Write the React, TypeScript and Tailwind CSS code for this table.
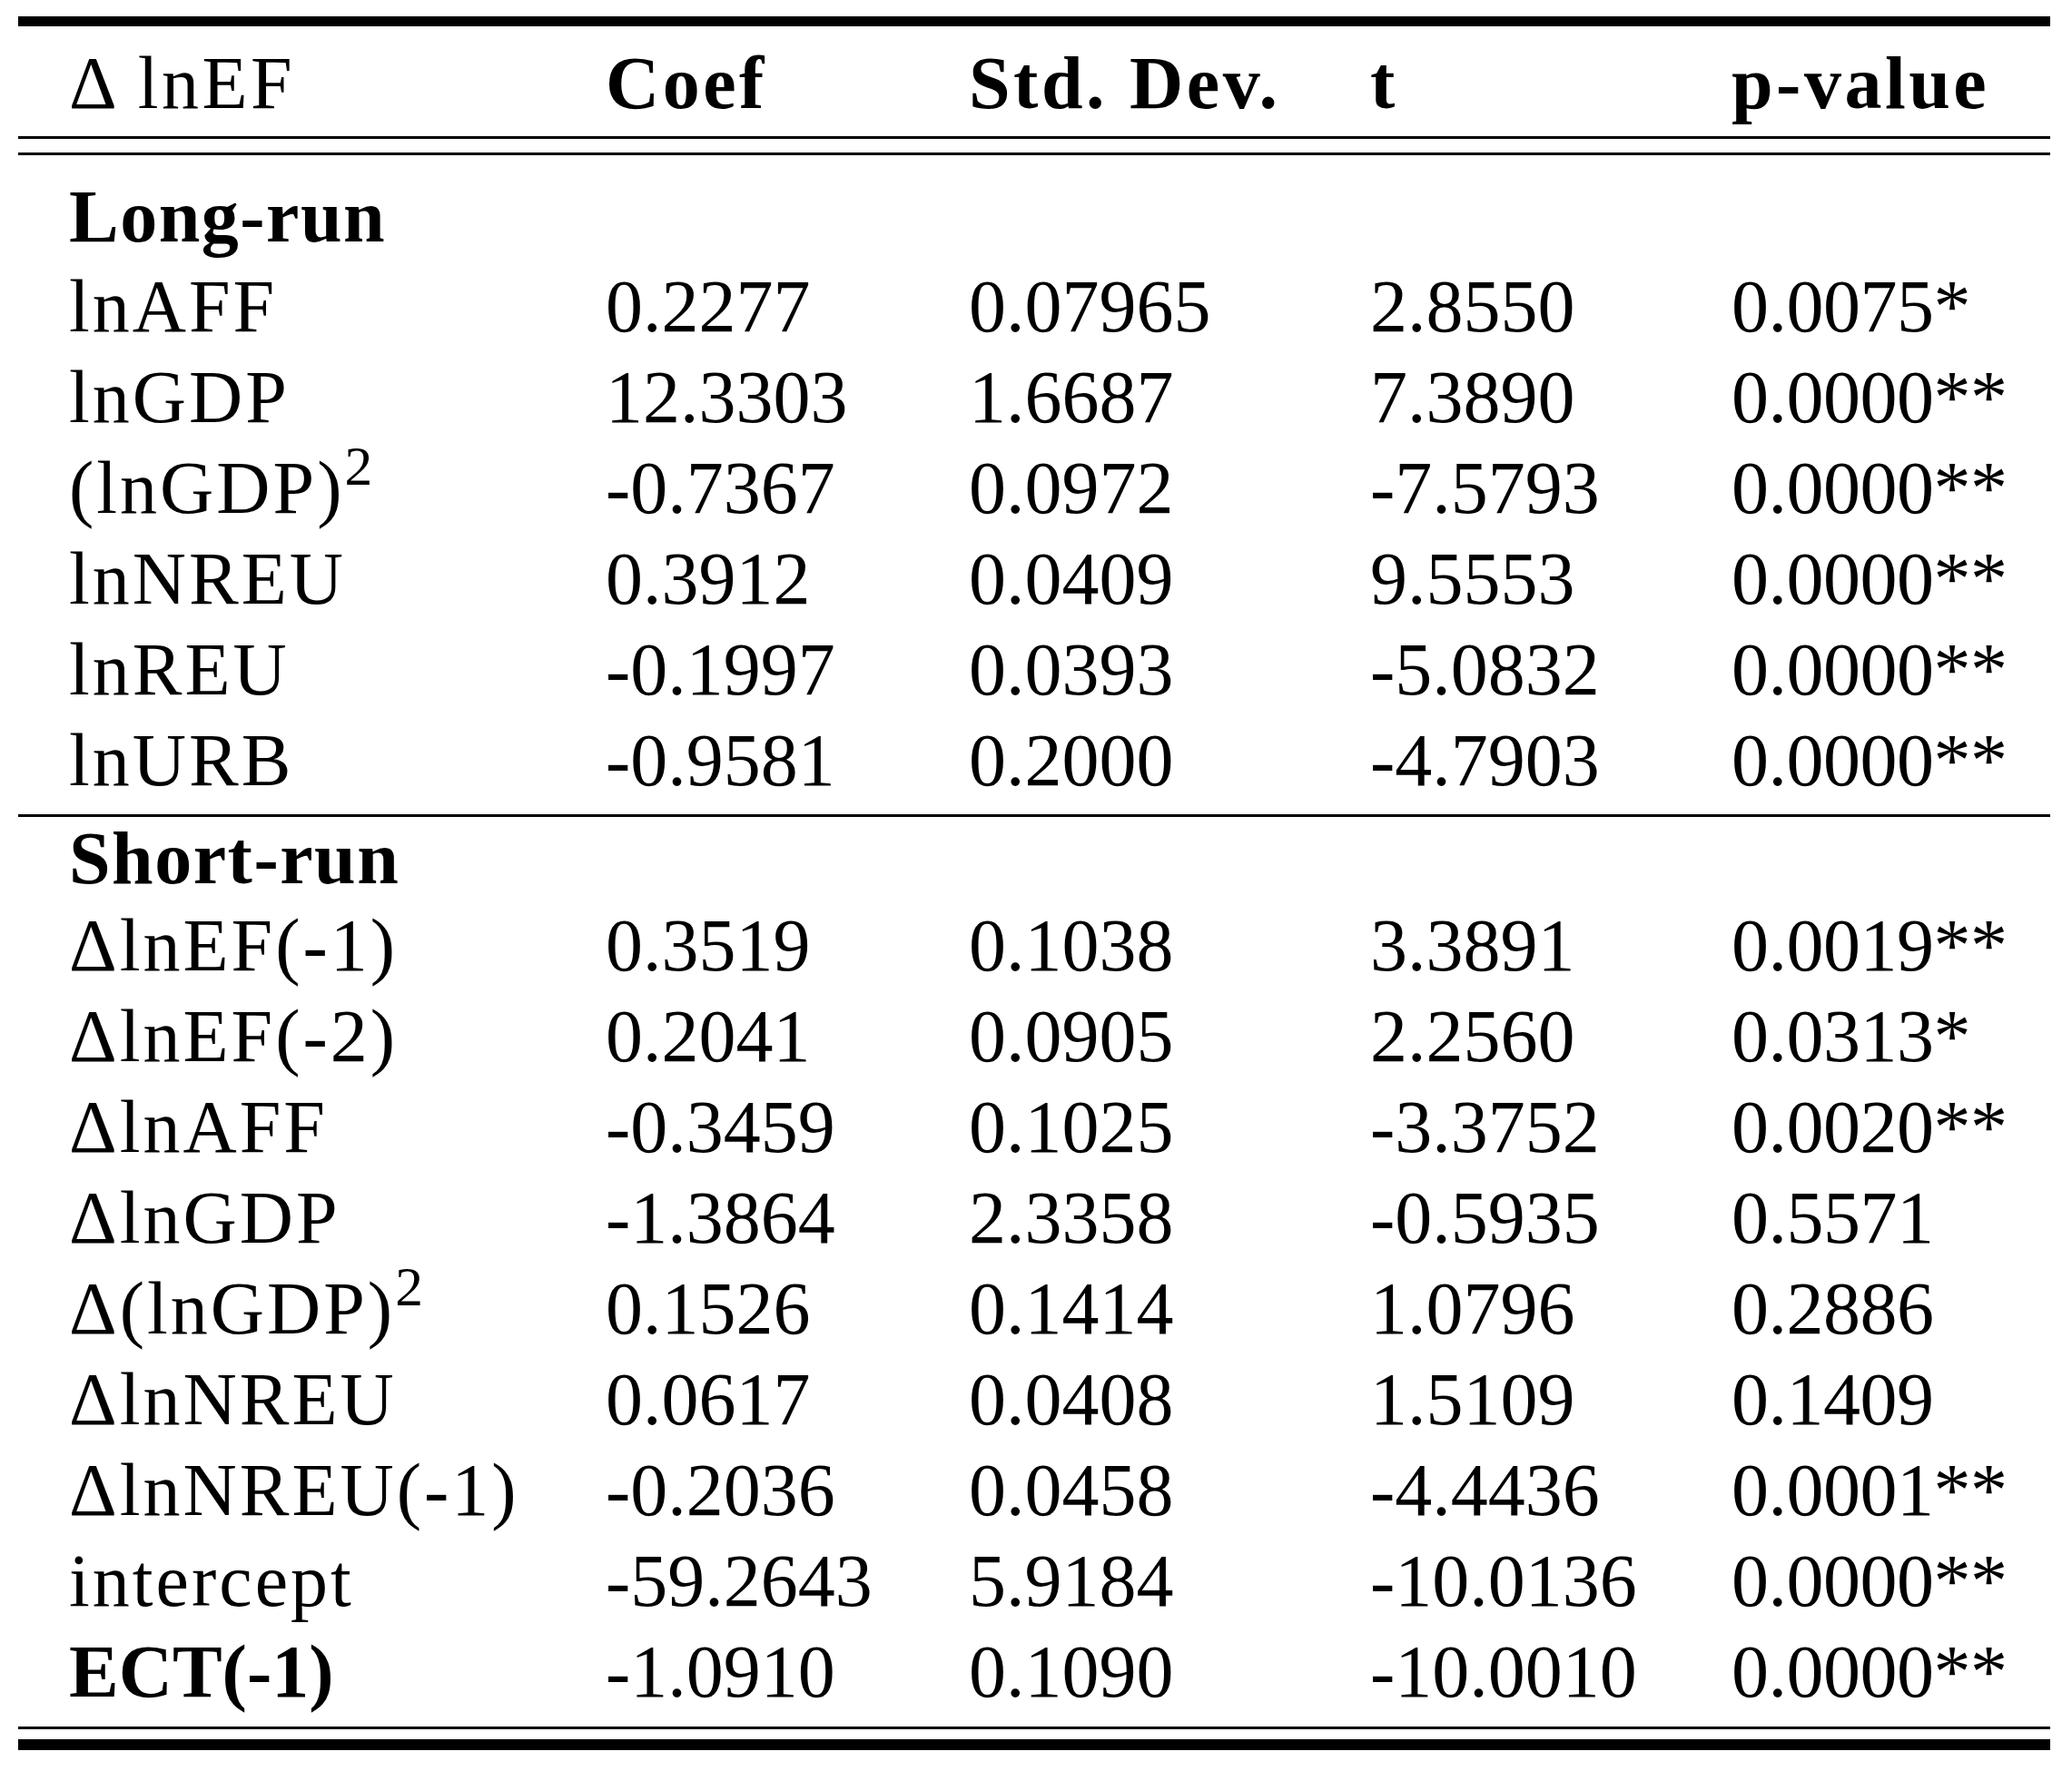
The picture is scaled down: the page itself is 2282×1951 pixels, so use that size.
import type { ReactNode } from 'react';

type Row = {
  label: ReactNode;
  coef: string;
  sd: string;
  t: string;
  p: string;
  bold?: boolean;
};

const longRun: Row[] = [
  { label: 'lnAFF', coef: '0.2277', sd: '0.07965', t: '2.8550', p: '0.0075*' },
  { label: 'lnGDP', coef: '12.3303', sd: '1.6687', t: '7.3890', p: '0.0000**' },
  {
    label: (
      <>
        (lnGDP)<sup>2</sup>
      </>
    ),
    coef: '-0.7367',
    sd: '0.0972',
    t: '-7.5793',
    p: '0.0000**',
  },
  { label: 'lnNREU', coef: '0.3912', sd: '0.0409', t: '9.5553', p: '0.0000**' },
  { label: 'lnREU', coef: '-0.1997', sd: '0.0393', t: '-5.0832', p: '0.0000**' },
  { label: 'lnURB', coef: '-0.9581', sd: '0.2000', t: '-4.7903', p: '0.0000**' },
];

const shortRun: Row[] = [
  { label: 'ΔlnEF(-1)', coef: '0.3519', sd: '0.1038', t: '3.3891', p: '0.0019**' },
  { label: 'ΔlnEF(-2)', coef: '0.2041', sd: '0.0905', t: '2.2560', p: '0.0313*' },
  { label: 'ΔlnAFF', coef: '-0.3459', sd: '0.1025', t: '-3.3752', p: '0.0020**' },
  { label: 'ΔlnGDP', coef: '-1.3864', sd: '2.3358', t: '-0.5935', p: '0.5571' },
  {
    label: (
      <>
        Δ(lnGDP)<sup>2</sup>
      </>
    ),
    coef: '0.1526',
    sd: '0.1414',
    t: '1.0796',
    p: '0.2886',
  },
  { label: 'ΔlnNREU', coef: '0.0617', sd: '0.0408', t: '1.5109', p: '0.1409' },
  { label: 'ΔlnNREU(-1)', coef: '-0.2036', sd: '0.0458', t: '-4.4436', p: '0.0001**' },
  { label: 'intercept', coef: '-59.2643', sd: '5.9184', t: '-10.0136', p: '0.0000**' },
  { label: 'ECT(-1)', coef: '-1.0910', sd: '0.1090', t: '-10.0010', p: '0.0000**', bold: true },
];

function DataRow({ row }: { row: Row }) {
  return (
    <div className="grid grid-cols-[591px_400px_442px_398px_1fr] pl-[56px] h-[100px] leading-[100px] whitespace-nowrap">
      <div className={row.bold ? 'font-bold' : 'tracking-[3px]'}>{row.label}</div>
      <div>{row.coef}</div>
      <div>{row.sd}</div>
      <div>{row.t}</div>
      <div className="tracking-[-0.5px]">{row.p}</div>
    </div>
  );
}

export default function App() {
  return (
    <div className="min-h-screen bg-white text-black font-['Liberation_Serif',serif] text-[82px]">
      <div className="ml-[20px] w-[2238px] pt-[18px]">
        {/* top rule */}
        <div className="h-[11px] bg-black" />

        {/* header */}
        <div className="mt-[13px] grid grid-cols-[591px_400px_442px_398px_1fr] pl-[56px] h-[100px] leading-[100px] whitespace-nowrap tracking-[3.5px]">
          <div>Δ lnEF</div>
          <div className="font-bold">Coef</div>
          <div className="font-bold">Std. Dev.</div>
          <div className="font-bold">t</div>
          <div className="font-bold">p-value</div>
        </div>

        <div className="mt-[8px] h-[3px] bg-black" />
        <div className="mt-[15px] h-[3px] bg-black" />

        {/* long-run */}
        <div className="mt-[19px] pl-[56px] h-[98px] leading-[98px] font-bold tracking-[1.5px]">Long-run</div>
        {longRun.map((r, i) => (
          <DataRow key={i} row={r} />
        ))}

        <div className="mt-[9px] h-[3px] bg-black" />

        {/* short-run */}
        <div className="pl-[56px] h-[92px] leading-[92px] font-bold tracking-[1.5px]">Short-run</div>
        {shortRun.map((r, i) => (
          <DataRow key={i} row={r} />
        ))}

        {/* bottom rules */}
        <div className="mt-[10px] h-[3px] bg-black" />
        <div className="mt-[11px] h-[12px] bg-black" />
      </div>
    </div>
  );
}
